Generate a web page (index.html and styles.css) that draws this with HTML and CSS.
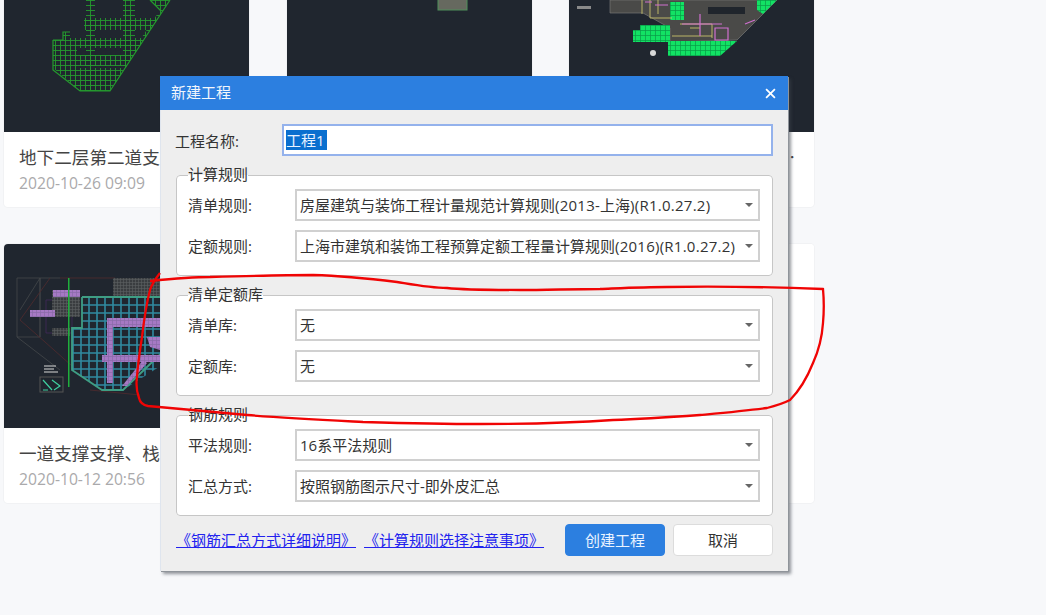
FILE: index.html
```html
<!DOCTYPE html>
<html lang="zh-CN">
<head>
<meta charset="utf-8">
<title>新建工程</title>
<link rel="stylesheet" href="styles.css">
</head>
<body>
<main class="grid">
  <article class="card">
    <svg class="thumb" viewBox="4 -52 245 184">
      <defs>
        <pattern id="mesh" width="5" height="5" patternUnits="userSpaceOnUse">
          <path d="M0 .5H5M.5 0V5" stroke="#259a2e" stroke-width=".9" fill="none"/>
        </pattern>
        <clipPath id="meshClip"><path d="M53 40H63V32H84V0H170L110 91H80L53 70Z"/></clipPath>
        <pattern id="blocks" width="5" height="5" patternUnits="userSpaceOnUse">
          <rect width="5" height="5" fill="#12e264"/>
          <path d="M0 .5H5M.5 0V5" stroke="#0a9a48" stroke-width=".7" fill="none"/>
        </pattern>
        <pattern id="cyan" width="8" height="8" patternUnits="userSpaceOnUse">
          <path d="M0 1H8M1 0V8" stroke="#2f8aa0" stroke-width="1.6" fill="none"/>
        </pattern>
        <pattern id="greygrid" width="3" height="3" patternUnits="userSpaceOnUse">
          <rect width="3" height="3" fill="#3a3d40"/>
          <path d="M0 .5H3M.5 0V3" stroke="#5d5f61" stroke-width=".6" fill="none"/>
        </pattern>
        <pattern id="purple" width="4" height="4" patternUnits="userSpaceOnUse">
          <rect width="4" height="4" fill="#a679c4"/>
          <path d="M0 .5H4M.5 0V4" stroke="#8a6aa8" stroke-width=".7" fill="none"/>
        </pattern>
      </defs>
      <rect x="4" y="-52" width="245" height="184" class="cad"/>
      <g clip-path="url(#meshClip)">
        <rect x="86" y="0" width="9" height="92" fill="url(#mesh)"/>
        <rect x="123" y="0" width="12" height="70" fill="url(#mesh)"/>
        <rect x="84" y="18" width="80" height="12" fill="url(#mesh)"/>
        <rect x="53" y="38" width="100" height="10" fill="url(#mesh)"/>
        <rect x="63" y="32" width="7" height="8" fill="url(#mesh)"/>
        <rect x="53" y="48" width="24" height="20" fill="url(#mesh)"/>
        <rect x="76" y="55" width="70" height="11" fill="url(#mesh)"/>
        <path d="M53 68H130L110 91H80Z" fill="url(#mesh)"/>
        <path d="M130 62L160 15L170 0H150L160 10L120 70Z" fill="url(#mesh)"/>
      </g>
      <path d="M53 40V70L80 91H110L170 0M150 0L160 10M53 40H63V32H70" fill="none" stroke="#259a2e" stroke-width="1.2"/>
    </svg>
    <div class="info">
      <h3 class="name">地下二层第二道支撑平面图</h3>
      <p class="date">2020-10-26 09:09</p>
    </div>
  </article>

  <article class="card">
    <svg class="thumb" viewBox="286 -52 245 184">
      <rect x="286" y="-52" width="245" height="184" class="cad"/>
      <rect x="437" y="-10" width="29" height="20" fill="#66695f" stroke="#4f8f5a"/>
    </svg>
    <div class="info">
      <h3 class="name">地下一层平面图</h3>
      <p class="date">2020-10-20 10:15</p>
    </div>
  </article>

  <article class="card">
    <svg class="thumb" viewBox="569 -52 245 184">
      <rect x="569" y="-52" width="245" height="184" class="cad"/>
      <rect x="577" y="6" width="14" height="3" fill="#8a8a8a"/>
      <path d="M610 0V13H643L670 28V42L737 40L777 0Z" fill="#4a4a48" stroke="#777" stroke-width=".7"/>
      <rect x="633" y="30" width="37" height="12" fill="url(#blocks)"/>
      <rect x="640" y="25" width="30" height="6" fill="url(#blocks)"/>
      <path d="M668 41H737L720 56H668Z" fill="url(#blocks)"/>
      <rect x="670" y="2" width="14" height="18" fill="url(#blocks)"/>
      <path d="M757 0H777L763 14L757 10Z" fill="url(#blocks)"/>
      <rect x="708" y="7" width="37" height="7" fill="#20252c"/>
      <path d="M642 0V14M650 0V18H672M658 0V14M680 24H712V38M690 28H700M672 36H712" stroke="#d8d070" stroke-width=".8" fill="none"/>
      <path d="M645 2H652M655 5H668M682 24H722M700 14V36M715 28H728V40H715ZM745 24L755 20" stroke="#d070d0" stroke-width="1.2" fill="none"/>
      <circle cx="653" cy="53" r="3" fill="#d8d8d8"/>
    </svg>
    <div class="info">
      <h3 class="name">地下室底板及顶板结构施工平面布置图纸</h3>
      <p class="date">2020-10-18 14:32</p>
    </div>
  </article>

  <article class="card">
    <svg class="thumb" viewBox="4 244 245 184">
      <rect x="4" y="244" width="245" height="184" class="cad"/>
      <path d="M17 278V337H40V278M17 278H60M40 278V337M20 310L40 278M17 337L60 370" fill="none" stroke="#44474a" stroke-width=".8"/>
      <path d="M20 320L50 278M20 320L45 342L72 366M60 278L115 278M90 390L140 395" fill="none" stroke="#4c2a2e" stroke-width=".9"/>
      <path d="M46 300H72V333H46Z" fill="none" stroke="#43295a" stroke-width=".8"/>
      <rect x="52" y="290" width="28" height="27" fill="url(#greygrid)"/>
      <rect x="113" y="278" width="50" height="19" fill="url(#greygrid)"/>
      <rect x="52" y="328" width="18" height="8" fill="url(#greygrid)"/>
      <rect x="53" y="290" width="27" height="7" fill="url(#purple)"/>
      <rect x="30" y="310" width="25" height="7" fill="url(#purple)"/>
      <rect x="68" y="278" width="1.5" height="109" fill="#1fae3c"/>
      <path d="M82 297H170V360L123 390H102L72 370V328H82Z" fill="url(#cyan)"/>
      <path d="M82 297H170M82 297V328H72V370L102 390H123L170 345" fill="none" stroke="#3f9e84" stroke-width="1.8"/>
      <path d="M107 318H170V327H113V355H170V362H113V383H107V362H102V355H107Z" fill="url(#purple)"/>
      <path d="M147 337H170V343L160 350L150 347ZM147 363L127 386H122L143 360Z" fill="url(#purple)"/>
      <path d="M44 366H56M44 369H54M44 372H58" stroke="#d8d8d8" stroke-width="1"/>
      <rect x="40" y="377" width="23" height="15" fill="none" stroke="#555"/>
      <path d="M43 380L52 390M43 390H48M52 380L60 386L54 390" fill="none" stroke="#3fd0a0" stroke-width="1.2"/>
    </svg>
    <div class="info">
      <h3 class="name">一道支撑支撑、栈桥平面图</h3>
      <p class="date">2020-10-12 20:56</p>
    </div>
  </article>

  <article class="card">
    <div class="blank"></div>
    <div class="info"><h3 class="name">基坑围护平面</h3><p class="date">2020-10-10 11:20</p></div>
  </article>

  <article class="card">
    <div class="blank"></div>
    <div class="info"><h3 class="name">基坑立柱</h3><p class="date">2020-10-08 09:41</p></div>
  </article>
</main>

<section class="dialog">
  <header class="dialog-head">
    <span class="dialog-title">新建工程</span>
    <svg class="close" viewBox="0 0 10 10"><path d="M1 1L9 9M9 1L1 9"/></svg>
  </header>
  <div class="dialog-body">
    <div class="name-row">
      <span class="name-label">工程名称:</span>
      <div class="name-input"><span class="selected">工程1</span></div>
    </div>

    <fieldset class="group">
      <legend>计算规则</legend>
      <div class="field"><span class="label">清单规则:</span><div class="select">房屋建筑与装饰工程计量规范计算规则<span class="latin">(2013-</span>上海<span class="latin">)(R1.0.27.2)</span></div></div>
      <div class="field"><span class="label">定额规则:</span><div class="select">上海市建筑和装饰工程预算定额工程量计算规则<span class="latin">(2016)(R1.0.27.2)</span></div></div>
    </fieldset>

    <fieldset class="group">
      <legend>清单定额库</legend>
      <div class="field"><span class="label">清单库:</span><div class="select">无</div></div>
      <div class="field"><span class="label">定额库:</span><div class="select">无</div></div>
    </fieldset>

    <fieldset class="group">
      <legend>钢筋规则</legend>
      <div class="field"><span class="label">平法规则:</span><div class="select">16系平法规则</div></div>
      <div class="field"><span class="label">汇总方式:</span><div class="select">按照钢筋图示尺寸-即外皮汇总</div></div>
    </fieldset>

    <div class="actions">
      <a class="link" href="#">《钢筋汇总方式详细说明》</a>
      <a class="link" href="#">《计算规则选择注意事项》</a>
      <button class="btn primary" type="button">创建工程</button>
      <button class="btn" type="button">取消</button>
    </div>
  </div>
</section>

<svg class="scribble" viewBox="0 0 1046 615">
  <path d="M150 281C170 279 190 277 210 277C245 276 280 275 313 275C345 276 372 279 397 282C415 285 430 288 447 288C465 290 480 290 520 290C545 290 575 289 600 289C625 288 645 287 667 287C720 286 770 287 823 289C824 300 824 312 823 323C822 338 818 352 813 363C807 378 799 391 790 400C782 404 775 406 767 408C745 411 722 413 700 415C672 417 643 419 613 420C570 423 525 424 480 424C440 424 400 423 363 422C325 420 285 418 247 415C215 412 180 409 148 406C143 405 140 403 139 398C136 390 136 384 137 377C138 362 140 350 142 337C144 320 146 305 150 290C152 284 156 278 160 273" fill="none" stroke="#f00404" stroke-width="2.3"/>
</svg>
</body>
</html>
```
FILE: styles.css
```css
* {
  box-sizing: border-box;
}

html,
body {
  margin: 0;
  height: 100%;
}

body {
  position: relative;
  overflow: hidden;
  background: #f7f8fa;
  font-family: "Noto Sans CJK SC", "Noto Sans", sans-serif;
  color: #333;
}

.grid {
  display: grid;
  grid-template-columns: repeat(3, 245px);
  column-gap: 37.5px;
  row-gap: 37px;
  margin: -52px 0 0 4px;
}

.card {
  height: 259px;
  background: #fff;
  border-radius: 4px;
  overflow: hidden;
  box-shadow: 0 0 0 1px #f1f2f4;
}

.thumb {
  display: block;
  width: 245px;
  height: 184px;
  filter: blur(.4px);
}

.cad {
  fill: #20262f;
}

.blank {
  height: 184px;
  background: #fff;
}

.info {
  padding: 12px 15px 0;
}

.name {
  margin: 0;
  font-size: 17.6px;
  font-weight: 400;
  line-height: 26px;
  color: #444;
  white-space: nowrap;
  overflow: hidden;
  text-overflow: ellipsis;
}

.date {
  margin: 0;
  font-family: "Open Sans", sans-serif;
  font-size: 15.7px;
  line-height: 26px;
  color: #aaa9ab;
}

.dialog {
  position: absolute;
  left: 160px;
  top: 76px;
  width: 628px;
  height: 495px;
  background: #eee;
  font-family: "Open Sans", "Noto Sans CJK SC", sans-serif;
  box-shadow: inset 1px 0 0 #dfe5ee, 1px 1px 0 #8f949a, 3px 3px 3px rgba(60, 65, 75, .55);
}

.dialog-head {
  display: flex;
  align-items: center;
  justify-content: space-between;
  height: 34px;
  padding: 0 12px 0 11px;
  background: #2c7fe0;
  color: #f2f6fc;
  font-size: 15px;
}

.dialog-title {
  padding-bottom: 4px;
}

.close {
  width: 11px;
  height: 11px;
}

.close path {
  fill: none;
  stroke: #fff;
  stroke-width: 1.6;
}

.dialog-body {
  padding: 14px 15px 0 16px;
}

.name-row {
  display: flex;
  align-items: center;
  height: 32px;
  margin-bottom: 10px;
}

.name-label {
  width: 107px;
  margin-left: -1px;
  font-size: 15px;
}

.name-input {
  flex: 1;
  height: 32px;
  border: 2px solid #94b2ec;
  background: #fff;
  padding: 4px 0 0 2px;
}

.selected {
  display: block;
  width: 41px;
  height: 20px;
  font-size: 15px;
  line-height: 20px;
  background: #0a6fcf;
  color: #e8f2ff;
}

.group {
  margin: 0 0 10px;
  padding: 5px 12px 13px 11px;
  height: 110px;
  min-width: 0;
  border: 1px solid #c6c6c6;
  border-radius: 4px;
  background: #fff;
}

.group legend {
  padding: 0 0 2px;
  font-size: 15px;
  line-height: 16px;
  color: #333;
}

.field {
  display: flex;
  align-items: center;
  height: 32px;
  margin-bottom: 9px;
}

.field:last-child {
  margin-bottom: 0;
}

.label {
  width: 107px;
  flex: none;
  padding-bottom: 2px;
  font-size: 15px;
}

.select {
  position: relative;
  flex: 1;
  height: 32px;
  padding-left: 3px;
  border: 2px solid #d0d0d0;
  background: #fff;
  font-size: 15px;
  line-height: 28px;
  color: #333;
  white-space: nowrap;
}

.latin {
  letter-spacing: .25px;
}

.select::after {
  content: "";
  position: absolute;
  right: 5px;
  top: 12px;
  border-left: 4px solid transparent;
  border-right: 4px solid transparent;
  border-top: 4px solid #666;
}

.actions {
  display: flex;
  align-items: center;
  height: 32px;
  margin-top: -2px;
}

.link {
  font-size: 15px;
  line-height: 20px;
  margin-right: 8px;
  color: #2222ee;
}

.btn {
  width: 100px;
  height: 32px;
  padding: 0 0 2px;
  border: 1px solid #dcdcdc;
  border-radius: 4px;
  background: #fff;
  color: #333;
  font: inherit;
  font-size: 15px;
}

.btn.primary {
  margin-left: auto;
  margin-right: 8px;
  border-color: #2c7fe0;
  background: #2c7fe0;
  color: #eaf3ff;
}

.scribble {
  position: absolute;
  left: 0;
  top: 0;
  width: 1046px;
  height: 615px;
  pointer-events: none;
}
```
